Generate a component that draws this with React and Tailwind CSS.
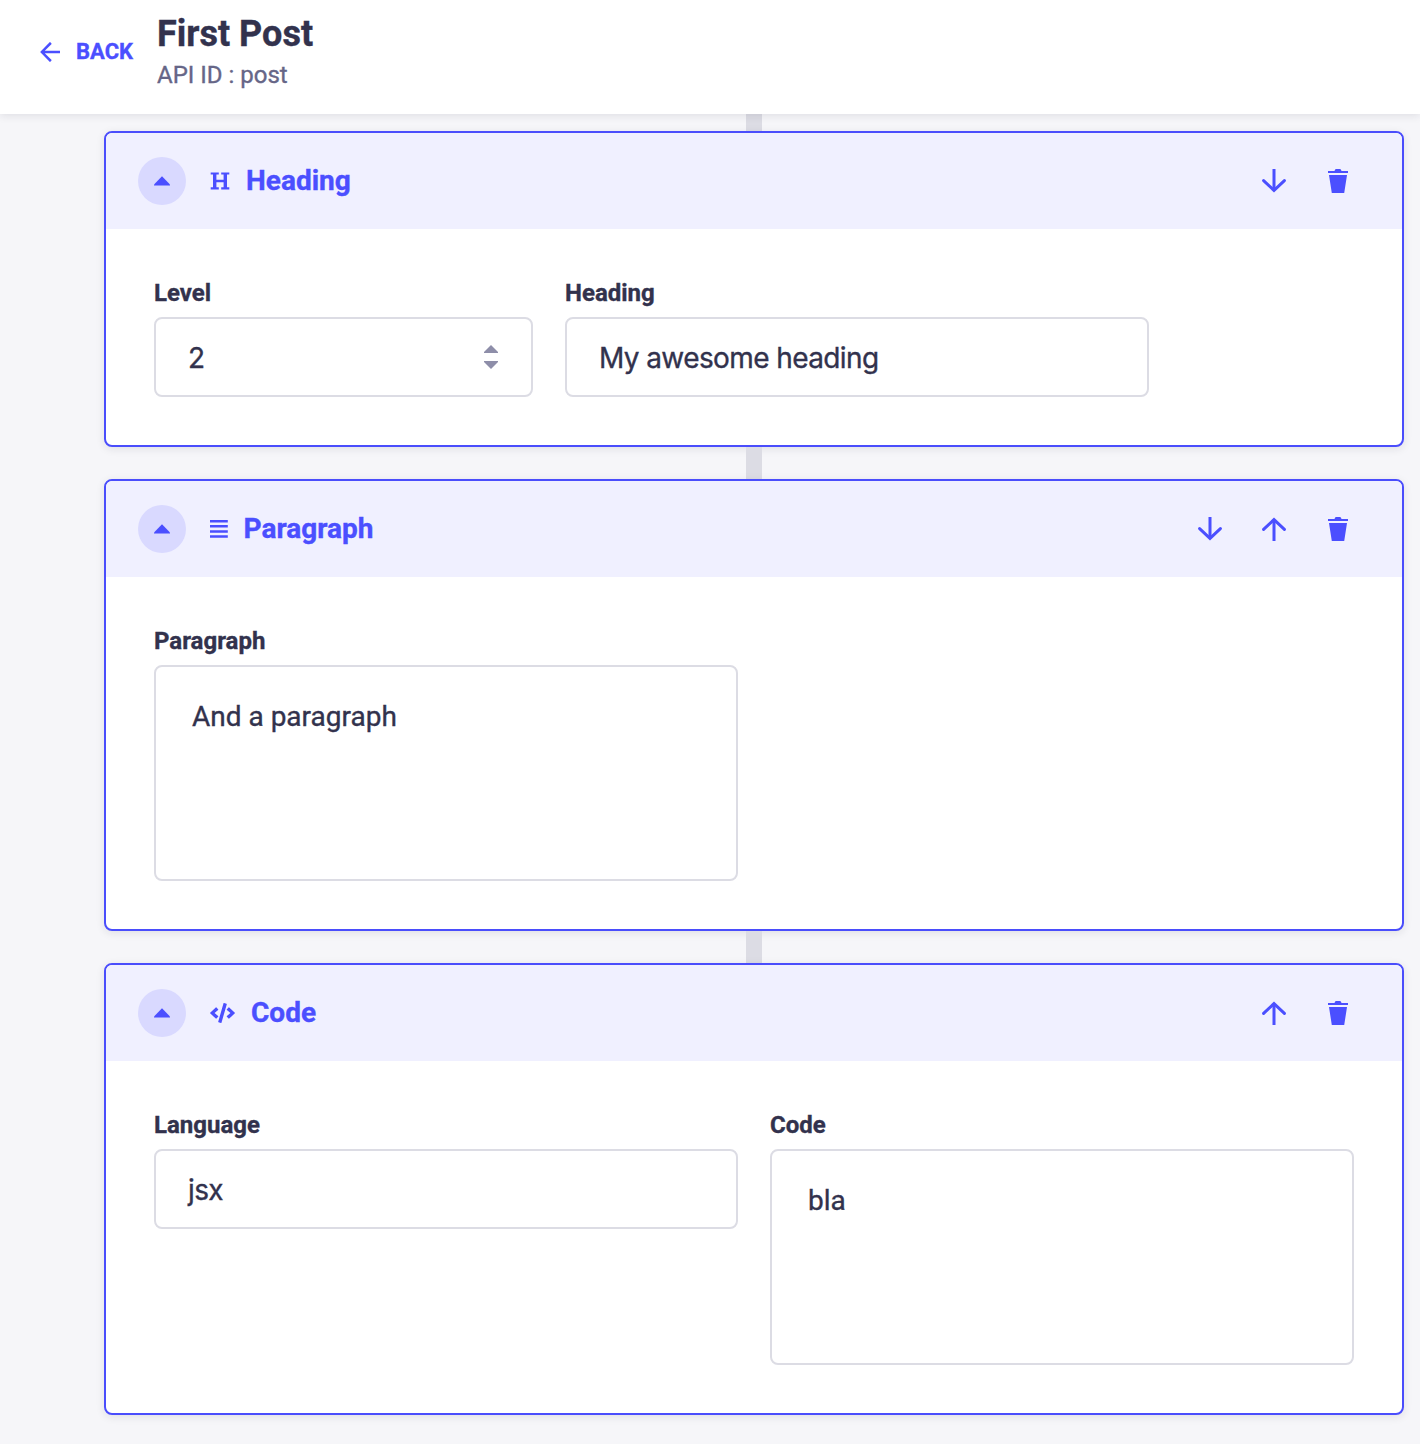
import React from "react";
import { FaCode } from "react-icons/fa";

function BackArrow() {
  return (
    <svg width="20" height="20" viewBox="0 0 24 24" fill="currentColor">
      <path d="M24 13.3a.2.2 0 0 1-.2.2H5.74l8.239 8.239a.2.2 0 0 1 0 .282L12.14 23.86a.2.2 0 0 1-.282 0L.14 12.14a.2.2 0 0 1 0-.282L11.86.14a.2.2 0 0 1 .282 0L13.98 1.98a.2.2 0 0 1 0 .282L5.74 10.5H23.8c.11 0 .2.09.2.2v2.6Z" />
    </svg>
  );
}

function Arrow({ up }) {
  return (
    <svg width="24" height="24" viewBox="0 0 24 24" fill="none" stroke="currentColor" strokeWidth="3" className={up ? "rotate-180" : ""}>
      <path d="M12 0v21" />
      <path d="M1.600 11.600 12 21.400l10.400-9.800" strokeLinecap="round" />
    </svg>
  );
}

function Trash() {
  return (
    <svg width="24" height="24" viewBox="0 0 24 24" fill="currentColor">
      <path d="M2 2h6.500Q9 0 10 0h4q1 0 1.500 2H22v2H2z" />
      <path d="M3 6h18l-2.800 18H5.800z" />
    </svg>
  );
}

function HeadingIcon() {
  return (
    <svg width="20" height="18" viewBox="0 0 20 18" fill="none" stroke="currentColor">
      <path strokeWidth="2.200" d="M.7 1.500h8.100M11.200 1.500h8.100M.7 16.400h8.100M11.200 16.400h8.100" />
      <path strokeWidth="2.600" d="M5 9h10" />
      <path strokeWidth="3.400" d="M4.700 1.500v15M15.300 1.500v15" />
    </svg>
  );
}

function Lines() {
  return (
    <svg width="18" height="18" viewBox="0 0 18 18" fill="currentColor">
      <path d="M0 0h17.800v2.500H0zM0 5.100h17.800v2.500H0zM0 10.200h17.800v2.500H0zM0 15.300h17.800v2.500H0z" />
    </svg>
  );
}

function Block({ icon, title, gap, down, up, children, height }) {
  return (
    <section className={`w-[1300px] rounded-lg border-2 border-[#4a4dfc] bg-white shadow-[0_2px_8px_rgba(33,33,52,0.1)] overflow-hidden ${height}`}>
      <header className="flex h-24 items-center bg-[#f0f0ff] pr-[52px] pl-8 text-[#4b4fff]">
        <span className="flex size-12 items-center justify-center rounded-full bg-[#d9d9ff]">
          <svg width="16" height="10" viewBox="0 0 16 10" fill="currentColor"><path d="M8 .300 16 8.500V9.500H0V8.500z" /></svg>
        </span>
        <span className="ml-6 flex items-center">{icon}</span>
        <h2 className={`text-[28px] leading-8 font-bold ${gap}`}>{title}</h2>
        <div className="ml-auto flex gap-10">
          {down && <Arrow />}
          {up && <Arrow up />}
          <Trash />
        </div>
      </header>
      <div className="flex gap-8 px-12 pt-12">{children}</div>
    </section>
  );
}

function Field({ label, width, children, area }) {
  return (
    <div className={width}>
      <div className="h-8 text-[24px] leading-8 font-bold">{label}</div>
      <div className={`mt-2 flex justify-between rounded-lg border-2 border-[#dcdce4] text-[28px] ${area ? "h-[216px] px-9 pt-8 leading-9" : "h-20 items-center px-8 font-['Inter',sans-serif] tracking-[-0.6px]"}`}>
        {children}
      </div>
    </div>
  );
}

const Link = ({ className = "h-8" }) => <div className={`w-4 bg-[#dcdce4] ${className}`} />;

export default function App() {
  return (
    <div className="h-[1444px] w-[1420px] overflow-hidden bg-[#f6f6f9] font-['Roboto',sans-serif] text-[#32324d] [-webkit-text-stroke:0.35px]">
      <header className="relative z-10 flex h-[114px] bg-white pl-10 shadow-[0_2px_8px_rgba(33,33,52,0.1)]">
        <div className="flex h-[104px] w-[117px] items-center text-[#4b4fff]">
          <BackArrow />
          <span className="ml-4 pb-0.5 text-[22px] font-bold">BACK</span>
        </div>
        <div className="pt-3">
          <h1 className="text-[36px] leading-11 font-bold">First Post</h1>
          <p className="mt-[3px] text-[24px] leading-8 text-[#666687]">API ID : post</p>
        </div>
      </header>
      <main className="flex flex-col items-center pl-[88px]">
        <Link className="h-[17px]" />
        <Block title="Heading" icon={<HeadingIcon />} gap="ml-4" down height="h-[316px]">
          <Field label="Level" width="w-[379px]">
            <span className="pt-0.5">2</span>
            <span className="mr-px flex flex-col gap-2 text-[#8e8ea9]">
              <svg width="14" height="8" viewBox="0 0 14 8" fill="currentColor"><path d="M7 0l7 7v1H0V7z" /></svg>
              <svg width="14" height="8" viewBox="0 0 14 8" fill="currentColor"><path d="M7 8l7-7V0H0v1z" /></svg>
            </span>
          </Field>
          <Field label="Heading" width="w-[584px]"><span className="pt-0.5">My awesome heading</span></Field>
        </Block>
        <Link />
        <Block title="Paragraph" icon={<Lines />} gap="ml-[15.5px]" down up height="h-[452px]">
          <Field label="Paragraph" width="w-[584px]" area><span>And a paragraph</span></Field>
        </Block>
        <Link />
        <Block title="Code" icon={<FaCode className="h-5 w-[25px]" />} gap="ml-4" up height="h-[452px]">
          <Field label="Language" width="w-[584px]"><span className="pt-0.5">jsx</span></Field>
          <Field label="Code" width="w-[584px]" area><span>bla</span></Field>
        </Block>
      </main>
    </div>
  );
}
